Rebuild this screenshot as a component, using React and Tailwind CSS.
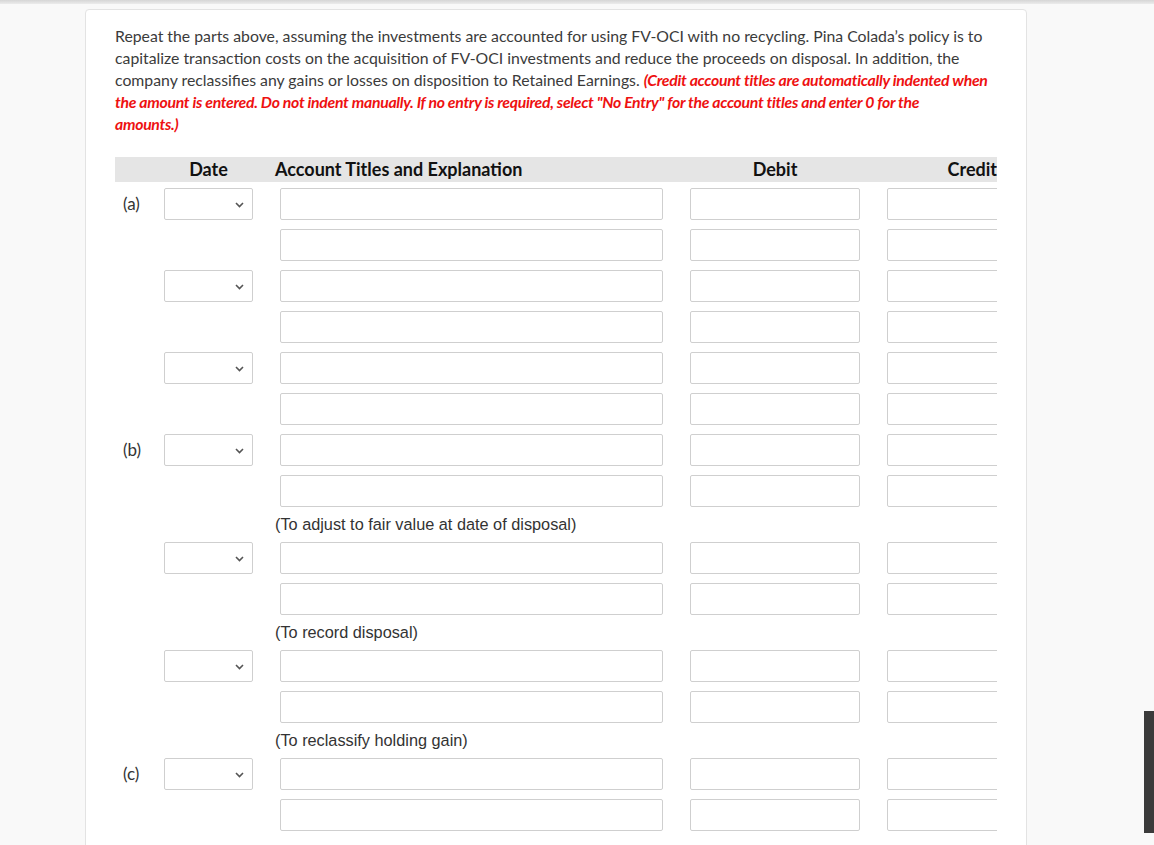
import React from "react";

function Chevron() {
  return (
    <svg width="9" height="6" viewBox="0 0 9 6" className="absolute right-[8px] top-[13px]">
      <path d="M1 1 L4.5 4.5 L8 1" fill="none" stroke="#555" strokeWidth="1.6" />
    </svg>
  );
}

function Row({ label, select }) {
  return (
    <div className="grid grid-cols-[22px_89px_383px_170px_170px] gap-x-[27px] h-[32px] items-center">
      <div className="pl-2 text-[17px] text-[#333] font-['Lato',sans-serif] whitespace-nowrap">{label}</div>
      <div>
        {select && (
          <div className="relative h-[32px] border border-[#cfcfcf] rounded-[2px] bg-white">
            <Chevron />
          </div>
        )}
      </div>
      <div className="h-[32px] border border-[#cfcfcf] rounded-[2px] bg-white" />
      <div className="h-[32px] border border-[#cfcfcf] rounded-[2px] bg-white" />
      <div className="h-[32px] border border-[#cfcfcf] rounded-[2px] bg-white" />
    </div>
  );
}

function Note({ text }) {
  return (
    <div className="h-[17px] pl-[160px] text-[16.3px] leading-[17px] text-[#333] font-['Liberation_Sans',Arial,sans-serif] whitespace-nowrap">
      {text}
    </div>
  );
}

export default function App() {
  return (
    <div className="relative min-h-[845px] bg-[#f9f9f9] overflow-hidden">
      <div className="h-[4px] bg-gradient-to-b from-[#d6d6d6] to-[#ececec]" />
      <div className="pl-[85px] pt-[5px]">
        <div className="w-[942px] h-[900px] bg-white border border-[#e3e3e3] rounded-[4px] px-[29px] pt-[15px]">
          <p className="text-[15.8px] leading-[22px] text-[#3b3b3b] font-['Lato',sans-serif]">
            Repeat the parts above, assuming the investments are accounted for using FV-OCI with no recycling. Pina Colada’s policy is to capitalize transaction costs on the acquisition of FV-OCI investments and reduce the proceeds on disposal. In addition, the company reclassifies any gains or losses on disposition to Retained Earnings.{" "}
            <span className="font-bold italic text-[#ee1111] tracking-[-0.3px]">
              (Credit account titles are automatically indented when the amount is entered. Do not indent manually. If no entry is required, select "No Entry" for the account titles and enter 0 for the
              <br />
              amounts.)
            </span>
          </p>

          <div className="mt-[22px] w-[882px] overflow-hidden">
            <div className="grid grid-cols-[22px_89px_383px_170px_110px] gap-x-[27px] h-[25px] items-center bg-[#e5e5e5] text-[18px] font-bold text-[#111] font-['Lato',sans-serif] leading-[25px]">
              <div />
              <div className="text-center">Date</div>
              <div className="-ml-[5px] whitespace-nowrap">Account Titles and Explanation</div>
              <div className="text-center">Debit</div>
              <div className="text-right">Credit</div>
            </div>

            <div className="mt-[6px] flex flex-col gap-[9px] w-[1000px]">
              <Row label="(a)" select />
              <Row />
              <Row select />
              <Row />
              <Row select />
              <Row />
              <Row label="(b)" select />
              <Row />
              <Note text="(To adjust to fair value at date of disposal)" />
              <Row select />
              <Row />
              <Note text="(To record disposal)" />
              <Row select />
              <Row />
              <Note text="(To reclassify holding gain)" />
              <Row label="(c)" select />
              <Row />
            </div>
          </div>
        </div>
      </div>
      <div className="absolute right-0 top-[711px] w-[10px] h-[122px] bg-[#3b3b3b]" />
    </div>
  );
}
